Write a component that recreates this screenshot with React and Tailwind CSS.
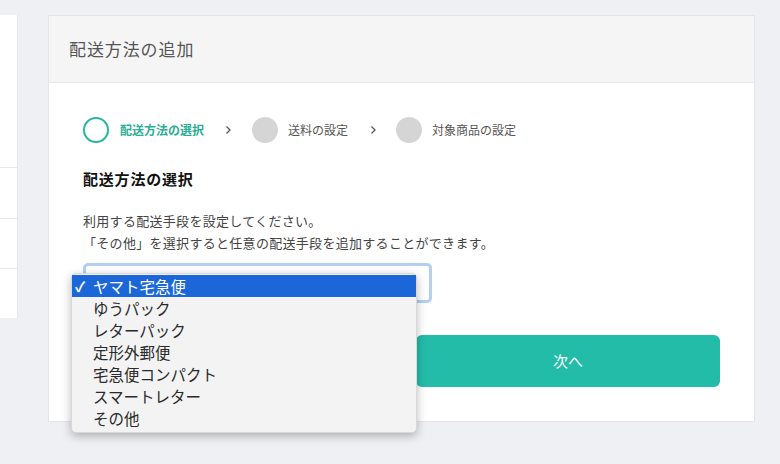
import React from "react";

const font = { fontFamily: '"Noto Sans CJK JP", "Noto Sans", sans-serif' };

function Chevron({ className }) {
  return (
    <svg width="7" height="10" viewBox="0 0 7 10" className={className}>
      <path d="M1.5 1.5 L5 5 L1.5 8.5" fill="none" stroke="#555" strokeWidth="1.3" />
    </svg>
  );
}

export default function App() {
  const items = ["ゆうパック", "レターパック", "定形外郵便", "宅急便コンパクト", "スマートレター", "その他"];
  return (
    <div className="w-[780px] h-[464px] overflow-hidden bg-[#eef0f3] flex items-start pt-[15px]" style={font}>
      {/* left panel */}
      <div className="w-[18px] h-[303px] bg-white border-r border-[#e4e6ea] flex flex-col shrink-0">
        <div className="h-[153px] border-b border-[#e8e8e8]" />
        <div className="h-[51px] border-b border-[#e8e8e8]" />
        <div className="h-[50px] border-b border-[#e8e8e8]" />
        <div className="flex-1" />
      </div>

      {/* card */}
      <div className="ml-[30px] w-[707px] bg-white border border-[#e3e5e9] shrink-0">
        <div className="h-[67px] bg-[#f5f5f5] border-b border-[#e7e7e7] flex items-center pl-[20px]">
          <span className="text-[17px] tracking-[0.9px] text-[#555]">配送方法の追加</span>
        </div>

        <div className="px-[34px] pt-[34px] pb-[34px]">
          {/* stepper */}
          <div className="flex items-center h-[26px]">
            <div className="w-[26px] h-[26px] rounded-full border-2 border-[#2bb59e]" />
            <span className="ml-[11px] text-[12px] font-bold text-[#2bae97]">配送方法の選択</span>
            <Chevron className="ml-[21px]" />
            <div className="ml-[20px] w-[26px] h-[26px] rounded-full bg-[#d5d5d5]" />
            <span className="ml-[10px] text-[12px] text-[#555]">送料の設定</span>
            <Chevron className="ml-[22px]" />
            <div className="ml-[19px] w-[26px] h-[26px] rounded-full bg-[#d5d5d5]" />
            <span className="ml-[10px] text-[12px] text-[#555]">対象商品の設定</span>
          </div>

          <div className="mt-[25px] text-[15px] leading-[22px] font-bold tracking-[0.8px] text-[#111]">配送方法の選択</div>

          <div className="mt-[20px] text-[13px] leading-[22px] tracking-[0.3px] text-[#444]">
            <div>利用する配送手段を設定してください。</div>
            <div>「その他」を選択すると任意の配送手段を追加することができます。</div>
          </div>

          <div className="mt-[9px] relative w-[349px] h-[40px] rounded-[5px] border-[3px] border-[#b3cff1] bg-white">
            <div className="absolute left-[-15px] top-[7px] w-[346px] h-[160px] bg-[#f3f3f3] rounded-[5px] shadow-[0_3px_10px_rgba(0,0,0,0.28)] border border-[#d8d8d8] pt-[1px] z-10">
              <div className="h-[22px] bg-[#1c67d8] text-white text-[15.5px] leading-[22px] flex items-center">
                <span className="w-[21px] pl-[3px] text-[14px] font-bold">✓</span>
                <span>ヤマト宅急便</span>
              </div>
              {items.map((t) => (
                <div key={t} className="h-[22px] leading-[22px] text-[15.5px] text-[#2a2a2a] pl-[21px]">
                  {t}
                </div>
              ))}
            </div>
          </div>

          <div className="mt-[32px] flex justify-end">
            <button className="w-[304px] h-[52px] rounded-[6px] bg-[#23bca9] text-white text-[15px]">次へ</button>
          </div>
        </div>
      </div>
    </div>
  );
}
